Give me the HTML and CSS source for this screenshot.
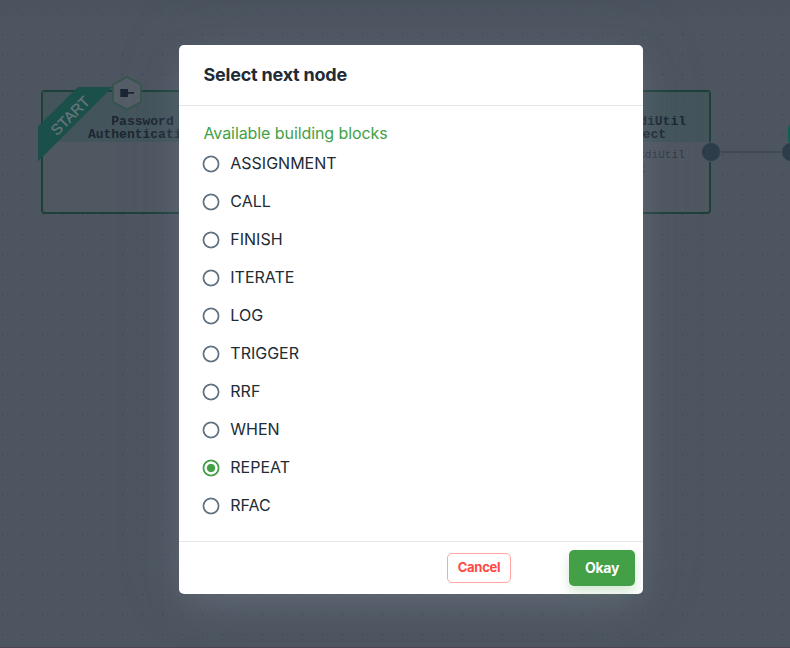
FILE: index.html
```html
<!DOCTYPE html>
<html lang="en">
<head>
<meta charset="utf-8">
<title>Select next node</title>
<link rel="stylesheet" href="styles.css">
</head>
<body>
<div class="canvas">
  <section class="node node-start">
    <header class="node-title">Password<br>Authentication</header>
  </section>
  <section class="node node-inject">
    <header class="node-title">diUtil<br><span class="title-end">ect</span></header>
    <p class="node-text">CdiUtil<br><span class="text-end">t</span></p>
  </section>
  <svg class="marks" width="790" height="648" viewBox="0 0 790 648">
    <path d="M38 126.5 78 87H112.5L38 161.5Z" fill="#1b4f49"/>
    <text class="ribbon-text" x="0" y="0" transform="translate(57 136.3) rotate(-45)">START</text>
    <path d="M127 77 141 84.5V102L127 109.3 113 102V84.5Z" fill="#555d67" stroke="#33554a" stroke-width="1.8"/>
    <path d="M120.3 89h7.7v3h6v1.8h-6V97h-7.7Z" fill="#1b2633"/>
    <path d="M721 152h60" stroke="#424754" stroke-width="2"/>
    <path d="M790 125c-1.5 1-2 2-2 4v15h2Z" fill="#106052"/>
    <circle cx="711" cy="152" r="9.5" fill="#2d3d49" stroke="#4c555f"/>
    <circle cx="791" cy="152" r="9.5" fill="#2d3d49" stroke="#4c555f"/>
  </svg>
</div>
<main class="screen">
  <form class="dialog">
    <h1 class="title">Select next node</h1>
    <fieldset class="body">
      <legend class="legend">Available building blocks</legend>
      <label class="option"><input type="radio" name="block"><span>ASSIGNMENT</span></label>
      <label class="option"><input type="radio" name="block"><span>CALL</span></label>
      <label class="option"><input type="radio" name="block"><span>FINISH</span></label>
      <label class="option"><input type="radio" name="block"><span>ITERATE</span></label>
      <label class="option"><input type="radio" name="block"><span>LOG</span></label>
      <label class="option"><input type="radio" name="block"><span>TRIGGER</span></label>
      <label class="option"><input type="radio" name="block"><span>RRF</span></label>
      <label class="option"><input type="radio" name="block"><span>WHEN</span></label>
      <label class="option"><input type="radio" name="block" checked><span>REPEAT</span></label>
      <label class="option"><input type="radio" name="block"><span>RFAC</span></label>
    </fieldset>
    <footer class="actions">
      <button type="button" class="cancel">Cancel</button>
      <button type="button" class="okay">Okay</button>
    </footer>
  </form>
</main>
</body>
</html>
```
FILE: styles.css
```css
* { box-sizing: border-box; }
body {
  margin: 0;
  height: 648px;
  overflow: hidden;
  position: relative;
  background: #4d5560;
  font-family: Inter, "Liberation Sans", sans-serif;
}
.canvas {
  position: absolute;
  inset: 0;
  overflow: hidden;
  background:
    linear-gradient(#49525d, #4d556000 22px),
    radial-gradient(circle at .5px .5px, #343c48 .8px, transparent 1px) 2px 14px / 20px 20px,
    #4d5560;
  border-bottom: 1px solid #494653;
}
.node {
  position: absolute;
  top: 90px;
  width: 200px;
  height: 124px;
  border: 2px solid #1e4039;
  border-radius: 4px;
  background: #4f5761;
  font-family: "Liberation Mono", monospace;
}
.node-start { left: 41px; text-align: center; }
.node-inject { left: 511px; text-align: right; }
.node-title {
  height: 50px;
  padding-top: 23px;
  background: #43545b;
  color: #1b2633;
  font-size: 13px;
  font-weight: 700;
  line-height: 13px;
}
.node-start .node-title { padding-left: 3px; }
.node-inject .node-title { padding-right: 23px; }
.title-end { margin-right: 20px; }
.node-text {
  margin: 6px 0 0;
  padding-right: 24px;
  color: #303945;
  font-size: 11.2px;
  line-height: 14px;
}
.text-end { margin-right: 39px; }
.marks { position: absolute; left: 0; top: 0; }
.ribbon-text {
  font: 15px "Liberation Sans", sans-serif;
  fill: #66767c;
  stroke: #66767c;
  stroke-width: .3px;
}
.screen {
  position: relative;
  height: 648px;
  padding: 45px 0 0 179px;
}
.dialog {
  width: 464px;
  height: 549px;
  display: flex;
  flex-direction: column;
  background: #fff;
  border-radius: 5px;
  box-shadow: 0 14px 34px -6px #7b859266, 0 0 64px #6e778830;
}
.title {
  margin: 0;
  height: 61px;
  padding: 0 24.5px;
  border-bottom: 1px solid #e5e6e8;
  color: #212b36;
  font-size: 18px;
  font-weight: 700;
  line-height: 60px;
  letter-spacing: -.22px;
}
.body {
  margin: 0;
  padding: 16px 23px 0;
  border: 0;
  flex: 1;
  min-width: 0;
}
.legend {
  float: left;
  width: 100%;
  padding: 0 1.5px;
  height: 22px;
  color: #43a047;
  font-size: 16px;
  line-height: 23px;
  letter-spacing: -.08px;
}
.option {
  clear: both;
  display: flex;
  align-items: center;
  gap: 10.3px;
  height: 38px;
  color: #212b36;
  font-size: 16px;
}
.option input {
  appearance: none;
  flex: none;
  width: 18px;
  height: 18px;
  margin: 2px 0 0;
  background: radial-gradient(circle, #fff 6.2px, #637381 7px 8px, #fff 8.8px);
}
.option input:checked {
  background: radial-gradient(circle, #43a047 3.7px, #fff 4.6px 6.2px, #43a047 7px 8px, #fff 8.8px);
}
.actions {
  height: 53px;
  display: flex;
  justify-content: flex-end;
  align-items: center;
  gap: 58px;
  padding-right: 8px;
  border-top: 1px solid #e5e6e8;
}
button {
  font-family: inherit;
  font-weight: 700;
}
.cancel {
  width: 64px;
  height: 30px;
  padding: 0 0 2px;
  border: 1px solid #ffa4a0;
  border-radius: 5px;
  background: #fff;
  color: #ff4842;
  font-size: 13px;
  letter-spacing: -.25px;
}
.okay {
  width: 66px;
  height: 36px;
  padding: 0 0 2px;
  border: 0;
  border-radius: 5px;
  background: #43a047;
  color: #fff;
  font-size: 14px;
  letter-spacing: -.25px;
  box-shadow: 0 6px 12px #43a0473d;
}
```
